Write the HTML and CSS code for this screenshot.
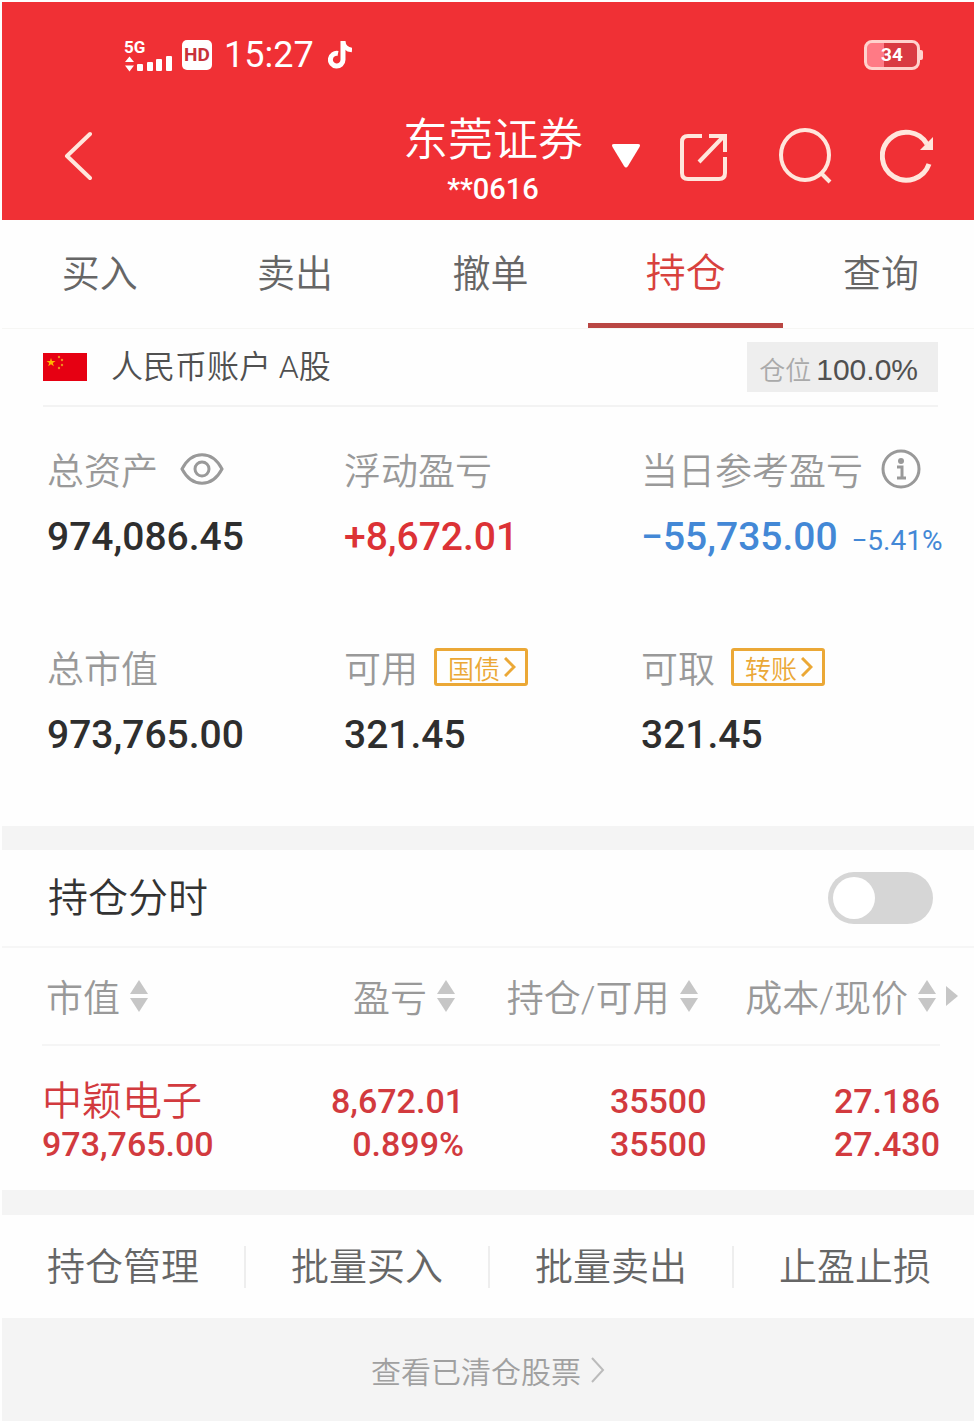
FILE: index.html
```html
<!DOCTYPE html>
<html lang="zh-CN">
<head>
  <meta charset="UTF-8">
  <meta name="viewport" content="width=device-width, initial-scale=1">
  <title>东莞证券 - 持仓</title>
  <link rel="stylesheet" href="styles.css">
</head>
<body>
  <header class="header">
    <div class="status-bar">
      <div class="signal">
        <span class="signal-label">5G</span>
        <svg width="48" height="16" viewBox="0 0 48 16" fill="#fff">
          <path d="M5.500 0.500L10 6H1zM5.500 15.500L10 9.500H1z"/>
          <rect x="13" y="8" width="6" height="7" rx="1"/>
          <rect x="23" y="6" width="6" height="9" rx="1"/>
          <rect x="32" y="3" width="6" height="12" rx="1"/>
          <rect x="42" y="0" width="6" height="15" rx="1"/>
        </svg>
      </div>
      <span class="hd">HD</span>
      <span class="time">15:27</span>
      <svg width="24" height="28" viewBox="0 0 24 28" fill="none" stroke="#fff" stroke-width="5">
        <path d="M10 12.500a6.300 6.300 0 1 0 5 6.200V0"/>
        <path d="M15 1c.8 4.500 4 7.500 9 8" stroke-width="4.500"/>
      </svg>
      <div class="battery"><span>34</span></div>
    </div>

    <div class="title-bar">
      <button class="icon-btn" aria-label="返回">
        <svg width="28" height="50" viewBox="0 0 28 50" fill="none" stroke="#ffe6dc" stroke-width="4" stroke-linecap="round" stroke-linejoin="round">
          <path d="M26 3L3 25l23 22"/>
        </svg>
      </button>
      <div class="broker">
        <h1>东莞证券</h1>
        <p>**0616</p>
      </div>
      <button class="icon-btn" aria-label="切换账户">
        <svg width="28" height="24" viewBox="0 0 28 24" fill="#fff">
          <path d="M2 0h24q3 0 1.500 3L16 22q-2 3-4 0L.500 3Q-1 0 2 0z"/>
        </svg>
      </button>
      <div class="actions">
        <button class="icon-btn" aria-label="分享">
          <svg width="48" height="50" viewBox="0 0 48 50" fill="none" stroke="#ffe6dc" stroke-width="4">
            <path d="M22 5H8q-6 0-6 6v31q0 6 6 6h31q6 0 6-6V26"/>
            <path d="M19 31L44 5M29 5h16v16"/>
          </svg>
        </button>
        <button class="icon-btn" aria-label="搜索">
          <svg width="56" height="56" viewBox="0 0 56 56" fill="none" stroke="#ffe6dc" stroke-width="4">
            <ellipse cx="29" cy="27" rx="24" ry="25"/>
            <path d="M45 45l9 9"/>
          </svg>
        </button>
        <button class="icon-btn" aria-label="刷新">
          <svg width="54" height="56" viewBox="0 0 54 56" fill="none" stroke="#ffe6dc" stroke-width="5">
            <path d="M49 36A24 24 0 1 1 47 16"/>
            <path d="M53 9v13H40z" fill="#ffe6dc" stroke="none"/>
          </svg>
        </button>
      </div>
    </div>
  </header>

  <nav class="tabs">
    <a href="#buy">买入</a>
    <a href="#sell">卖出</a>
    <a href="#cancel">撤单</a>
    <a href="#position" class="active">持仓</a>
    <a href="#query">查询</a>
  </nav>

  <section class="account">
    <div class="account-row">
      <svg width="44" height="28" viewBox="0 0 44 28">
        <rect width="44" height="28" fill="#e60012"/>
        <path d="M8 5l1 3h3.500l-2.700 2 1 3.200L8 11.300l-2.800 1.900 1-3.200-2.700-2H7z" fill="#ffb400"/>
        <g fill="#f08a20">
          <circle cx="16" cy="4" r="1.200"/>
          <circle cx="19" cy="7" r="1.200"/>
          <circle cx="19" cy="12" r="1.200"/>
          <circle cx="16" cy="15" r="1.200"/>
        </g>
      </svg>
      <h2>人民币账户 A股</h2>
      <div class="ratio"><span>仓位</span>100.0%</div>
    </div>

    <div class="metrics">
      <div class="metric">
        <div class="label">总资产
          <button class="icon-btn eye" aria-label="隐藏金额">
            <svg width="44" height="32" viewBox="0 0 44 32" fill="none" stroke="#999" stroke-width="3">
              <path d="M2 16C12-3 32-3 42 16C32 35 12 35 2 16z"/>
              <circle cx="22" cy="16" r="7"/>
            </svg>
          </button>
        </div>
        <div class="value">974,086.45</div>
      </div>
      <div class="metric">
        <div class="label">浮动盈亏</div>
        <div class="value up">+8,672.01</div>
      </div>
      <div class="metric">
        <div class="label">当日参考盈亏
          <button class="icon-btn info" aria-label="说明">
            <svg width="40" height="40" viewBox="0 0 40 40" fill="none" stroke="#999" stroke-width="3">
              <circle cx="20" cy="20" r="18"/>
              <path d="M16 18h5v11M16 29h9"/>
              <circle cx="20" cy="12" r="3" fill="#999" stroke="none"/>
            </svg>
          </button>
        </div>
        <div class="value down">−55,735.00 <small>−5.41%</small></div>
      </div>
      <div class="metric">
        <div class="label">总市值</div>
        <div class="value">973,765.00</div>
      </div>
      <div class="metric">
        <div class="label">可用
          <button class="tag">国债<svg width="12" height="20" viewBox="0 0 12 20" fill="none" stroke="#eba836" stroke-width="3"><path d="M1 1l9 9-9 9"/></svg></button>
        </div>
        <div class="value">321.45</div>
      </div>
      <div class="metric">
        <div class="label">可取
          <button class="tag">转账<svg width="12" height="20" viewBox="0 0 12 20" fill="none" stroke="#eba836" stroke-width="3"><path d="M1 1l9 9-9 9"/></svg></button>
        </div>
        <div class="value">321.45</div>
      </div>
    </div>
  </section>

  <section class="positions">
    <div class="switch-row">
      <label for="intraday">持仓分时</label>
      <input type="checkbox" id="intraday" class="switch">
    </div>

    <table>
      <thead>
        <tr>
          <th><button class="sort">市值<span class="arrows"></span></button></th>
          <th><button class="sort">盈亏<span class="arrows"></span></button></th>
          <th><button class="sort">持仓/可用<span class="arrows"></span></button></th>
          <th><button class="sort">成本/现价<span class="arrows"></span></button><span class="more"></span></th>
        </tr>
      </thead>
      <tbody>
        <tr>
          <td><span class="stock">中颖电子</span>973,765.00</td>
          <td><span>8,672.01</span>0.899%</td>
          <td><span>35500</span>35500</td>
          <td><span>27.186</span>27.430</td>
        </tr>
      </tbody>
    </table>
  </section>

  <div class="batch">
    <button>持仓管理</button>
    <button>批量买入</button>
    <button>批量卖出</button>
    <button>止盈止损</button>
  </div>

  <footer class="footer">
    <a href="#cleared">查看已清仓股票
      <svg width="14" height="26" viewBox="0 0 14 26" fill="none" stroke="#bbb" stroke-width="2"><path d="M1 1l11 12L1 25"/></svg>
    </a>
  </footer>
</body>
</html>
```
FILE: styles.css
```css
* {
  box-sizing: border-box;
}

body {
  margin: 0;
  padding: 2px 0 0 2px;
  min-height: 100vh;
  display: flex;
  flex-direction: column;
  background: #fefefe;
  color: #666;
  font-family: Roboto, "Noto Sans CJK SC", sans-serif;
  font-weight: 350;
}

h1, h2, p {
  margin: 0;
  font-weight: inherit;
}

a {
  color: inherit;
  text-decoration: none;
}

button {
  margin: 0;
  padding: 0;
  border: none;
  background: none;
  color: inherit;
  font: inherit;
  cursor: pointer;
}

svg {
  display: block;
  flex-shrink: 0;
}

.icon-btn {
  display: block;
}

/* header */
.header {
  background: #f03035;
  color: #fff;
}

.status-bar {
  height: 106px;
  padding: 0 54px 0 122px;
  display: flex;
  align-items: center;
}

.signal {
  width: 48px;
  margin-right: 10px;
}

.signal-label {
  display: block;
  font-size: 17px;
  line-height: 17px;
  font-weight: 700;
}

.hd {
  width: 30px;
  height: 30px;
  margin-right: 12px;
  border-radius: 5px;
  background: #fff;
  color: #c8323a;
  font-size: 19px;
  line-height: 30px;
  font-weight: 700;
  text-align: center;
}

.time {
  margin-right: 14px;
  font-size: 36px;
  line-height: 40px;
  font-weight: 400;
}

.battery {
  position: relative;
  width: 56px;
  height: 30px;
  margin-left: auto;
  border: 3px solid #ffd2cd;
  border-radius: 8px;
  background: linear-gradient(to right, #ff7a85 34%, #d93a42 34%);
  font-size: 19px;
  line-height: 24px;
  font-weight: 700;
  text-align: center;
}

.battery::after {
  content: "";
  position: absolute;
  top: 7px;
  right: -6px;
  width: 3px;
  height: 10px;
  border-radius: 0 2px 2px 0;
  background: #ffd2cd;
}

.title-bar {
  height: 112px;
  padding: 0 40px 16px 62px;
  display: flex;
  align-items: center;
}

.broker {
  margin: 0 29px 0 auto;
  text-align: center;
}

.broker h1 {
  font-size: 45px;
  line-height: 66px;
}

.broker p {
  font-size: 29px;
  line-height: 30px;
  font-weight: 500;
}

.actions {
  display: flex;
  align-items: center;
  gap: 48px;
  margin-left: 40px;
}

/* tabs */
.tabs {
  display: flex;
  height: 109px;
  overflow: hidden;
  border-bottom: 1px solid #f6f6f4;
}

.tabs a {
  flex: 0 0 20.1%;
  font-size: 38px;
  line-height: 108px;
  text-align: center;
}

.tabs .active {
  border-bottom: 5px solid #b94643;
  color: #d8413d;
  font-size: 40px;
}

/* account summary */
.account {
  padding: 0 36px 0 41px;
  border-bottom: 24px solid #f4f4f4;
}

.account-row {
  height: 78px;
  display: flex;
  align-items: center;
  border-bottom: 2px solid #f3f3f3;
}

.account-row h2 {
  margin-left: 24px;
  color: #505050;
  font-size: 32px;
  line-height: 44px;
}

.ratio {
  height: 50px;
  margin-left: auto;
  padding: 0 20px 0 12px;
  background: #eee;
  color: #505050;
  font-family: "Liberation Sans", "Noto Sans CJK SC", sans-serif;
  font-size: 30px;
  line-height: 56px;
}

.ratio span {
  margin-right: 5px;
  color: #aaa;
  font-size: 26px;
}

.metrics {
  display: grid;
  grid-template-columns: repeat(3, minmax(0, 1fr));
  row-gap: 70px;
  padding: 32px 0 61px 4px;
}

.metric {
  white-space: nowrap;
}

.label {
  display: flex;
  align-items: center;
  height: 60px;
  color: #999;
  font-size: 37px;
}

.eye {
  margin-left: 22px;
}

.info {
  margin-left: 18px;
}

.tag {
  display: flex;
  align-items: center;
  gap: 4px;
  height: 38px;
  margin-left: 16px;
  padding: 0 9px 0 11px;
  border: 3px solid #eba836;
  border-radius: 3px;
  color: #eba836;
  font-size: 26px;
}

.value {
  height: 68px;
  color: #2e2e2e;
  font-size: 39px;
  line-height: 76px;
  font-weight: 500;
}

.value small {
  margin-left: 4px;
  font-size: 28px;
  font-weight: 400;
}

.up {
  color: #dc3236;
}

.down {
  color: #4388d6;
}

/* positions */
.positions {
  border-bottom: 25px solid #f4f4f4;
}

.switch-row {
  display: flex;
  align-items: center;
  justify-content: space-between;
  height: 98px;
  padding: 0 41px 0 46px;
  border-bottom: 2px solid #f6f6f6;
  color: #333;
  font-size: 40px;
}

.switch-row label {
  padding-bottom: 6px;
}

.switch {
  appearance: none;
  width: 105px;
  height: 52px;
  margin: 0;
  padding: 5px;
  border-radius: 26px;
  background: #d6d6d6;
  cursor: pointer;
}

.switch::before {
  content: "";
  display: block;
  width: 42px;
  height: 42px;
  border-radius: 50%;
  background: #fff;
}

.switch:checked {
  background: #f03035;
}

.switch:checked::before {
  margin-left: auto;
}

table {
  width: calc(100% - 74px);
  margin: 0 34px 0 40px;
  border-collapse: collapse;
  table-layout: fixed;
}

th {
  position: relative;
  width: 27%;
  height: 97px;
  padding: 0 9px 0 0;
  border-bottom: 2px solid #f5f5f5;
  color: #999;
  font-size: 37px;
  font-weight: inherit;
  text-align: right;
  white-space: nowrap;
}

th:nth-child(2) {
  width: 20%;
}

th:last-child {
  width: 26%;
  padding-right: 4px;
}

th:first-child {
  padding-left: 4px;
  text-align: left;
}

.sort {
  display: inline-flex;
  align-items: center;
  gap: 10px;
}

.arrows {
  display: flex;
  flex-direction: column;
  gap: 4px;
}

.arrows::before,
.arrows::after {
  content: "";
  border: 9px solid transparent;
}

.arrows::before {
  border-top: none;
  border-bottom: 14px solid #c6c6c6;
}

.arrows::after {
  border-bottom: none;
  border-top: 14px solid #c6c6c6;
}

.more {
  position: absolute;
  top: 38px;
  right: -18px;
  border: 10px solid transparent;
  border-right: none;
  border-left: 12px solid #c6c6c6;
}

td {
  height: 145px;
  padding: 10px 0 0;
  color: #d23a3e;
  font-size: 34px;
  line-height: 43px;
  font-weight: 500;
  text-align: right;
}

td:first-child {
  text-align: left;
}

td span {
  display: block;
}

td .stock {
  font-size: 40px;
  font-weight: 350;
}

/* batch actions */
.batch {
  display: flex;
  align-items: center;
  height: 103px;
  overflow: hidden;
}

.batch button {
  flex: 0 0 25.1%;
  height: 42px;
  border-right: 2px solid #eee;
  font-size: 38px;
  line-height: 38px;
}

.footer {
  flex: 1;
  min-height: 103px;
  background: #f4f4f4;
  color: #a0a0a0;
  font-size: 30px;
}

.footer a {
  display: flex;
  align-items: center;
  justify-content: center;
  gap: 10px;
  height: 103px;
}
```
